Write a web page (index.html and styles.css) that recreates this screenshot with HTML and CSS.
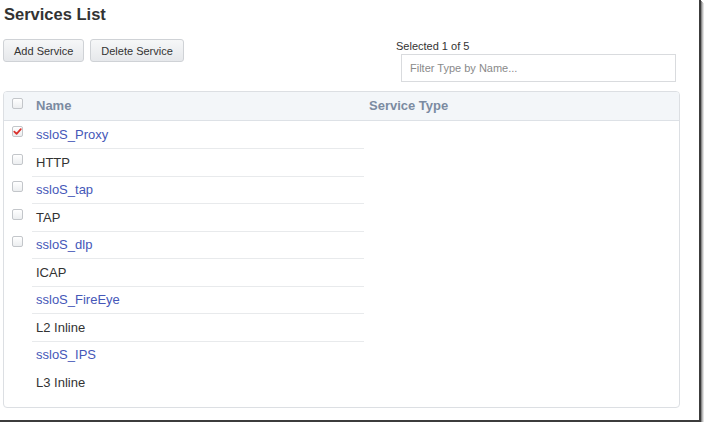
FILE: index.html
```html
<!DOCTYPE html>
<html>
<head>
<meta charset="utf-8">
<link rel="stylesheet" href="styles.css">
</head>
<body>
<div class="frame">
  <h1 class="title">Services List</h1>
  <div class="toolbar">
    <div class="buttons">
      <button class="btn">Add Service</button>
      <button class="btn">Delete Service</button>
    </div>
    <div class="filter">
      <div class="selected">Selected 1 of 5</div>
      <input class="filter-input" type="text" placeholder="Filter Type by Name...">
    </div>
  </div>
  <div class="panel">
    <div class="head">
      <div class="cell-cb"><span class="cb"></span></div>
      <div class="cell-name">Name</div>
      <div class="cell-type">Service Type</div>
    </div>
    <div class="row"><div class="cell-cb"><span class="cb checked"><svg viewBox="0 0 11 11" width="11" height="11"><path d="M2.3 5.6 L4.6 7.8 L8.8 3.2" fill="none" stroke="#d9322e" stroke-width="1.8" stroke-linecap="round" stroke-linejoin="round"/></svg></span></div><div class="cell-name sep"><span class="link">ssloS_Proxy</span></div><div class="cell-type"></div></div>
    <div class="row"><div class="cell-cb"><span class="cb"></span></div><div class="cell-name sep">HTTP</div><div class="cell-type"></div></div>
    <div class="row"><div class="cell-cb"><span class="cb"></span></div><div class="cell-name sep"><span class="link">ssloS_tap</span></div><div class="cell-type"></div></div>
    <div class="row"><div class="cell-cb"><span class="cb"></span></div><div class="cell-name sep">TAP</div><div class="cell-type"></div></div>
    <div class="row"><div class="cell-cb"><span class="cb"></span></div><div class="cell-name sep"><span class="link">ssloS_dlp</span></div><div class="cell-type"></div></div>
    <div class="row"><div class="cell-cb"></div><div class="cell-name sep">ICAP</div><div class="cell-type"></div></div>
    <div class="row"><div class="cell-cb"></div><div class="cell-name sep"><span class="link">ssloS_FireEye</span></div><div class="cell-type"></div></div>
    <div class="row"><div class="cell-cb"></div><div class="cell-name sep">L2 Inline</div><div class="cell-type"></div></div>
    <div class="row"><div class="cell-cb"></div><div class="cell-name"><span class="link">ssloS_IPS</span></div><div class="cell-type"></div></div>
    <div class="row"><div class="cell-cb"></div><div class="cell-name">L3 Inline</div><div class="cell-type"></div></div>
  </div>
</div>
</body>
</html>
```
FILE: styles.css
```css
html, body {
  margin: 0;
  padding: 0;
  background: #ffffff;
}
body {
  font-family: "Liberation Sans", Arial, sans-serif;
  color: #333333;
}
.frame {
  width: 699px;
  height: 420px;
  border-right: 2px solid #3c3c3c;
  border-bottom: 2px solid #3c3c3c;
  box-shadow: 1px 1px 0 #8a8a8a, 2px 2px 0 #bdbdbd, 3px 3px 0 #e2e2e2;
  background: #ffffff;
  overflow: hidden;
}
.title {
  margin: 0;
  padding: 4px 0 0 4px;
  font-size: 16.5px;
  line-height: 20px;
  font-weight: bold;
  color: #333333;
}
.toolbar {
  display: flex;
  justify-content: space-between;
  width: 673px;
  margin: 15px 0 0 3px;
}
.buttons {
  display: flex;
  gap: 6px;
  align-items: flex-start;
}
.btn {
  font-family: "Liberation Sans", Arial, sans-serif;
  font-size: 11px;
  color: #333333;
  height: 23px;
  padding: 0 10px;
  white-space: nowrap;
  border: 1px solid #cfd2d6;
  border-radius: 3px;
  background: linear-gradient(#f6f7f8, #e6e8eb);
  margin: 0;
}
.filter {
  display: flex;
  flex-direction: column;
  width: 281px;
}
.selected {
  font-size: 11px;
  line-height: 15px;
  color: #333333;
  padding-left: 1px;
}
.filter-input {
  box-sizing: border-box;
  width: 275px;
  height: 28px;
  margin: 0 0 0 6px;
  border: 1px solid #d9dbde;
  padding: 0 8px;
  font-family: "Liberation Sans", Arial, sans-serif;
  font-size: 11px;
  color: #333333;
  outline: none;
}
.filter-input::placeholder {
  color: #8a8a8a;
}
.panel {
  box-sizing: border-box;
  width: 677px;
  height: 317px;
  margin: 9px 0 0 3px;
  border: 1px solid #dcdfe3;
  border-radius: 4px;
}
.head {
  display: grid;
  grid-template-columns: 28px 332px 1fr;
  box-sizing: border-box;
  height: 29px;
  background: #f3f6f9;
  border-bottom: 1px solid #dde1e6;
  border-radius: 3px 3px 0 0;
  font-size: 13px;
  font-weight: bold;
  color: #7b8ba1;
}
.head .cell-name {
  padding-left: 4px;
  line-height: 28px;
}
.head .cell-type {
  padding-left: 5px;
  line-height: 28px;
}
.head .cell-cb .cb {
  margin-top: 6px;
}
.row {
  display: grid;
  grid-template-columns: 28px 332px 1fr;
  height: 27.5px;
  font-size: 13px;
}
.cb {
  display: block;
  box-sizing: border-box;
  width: 11px;
  height: 11px;
  margin: 5px 0 0 8px;
  border: 1px solid #c3c6ca;
  border-radius: 2px;
  background: linear-gradient(#ffffff, #eceef0);
}
.cb svg {
  display: block;
  margin: -1px 0 0 -1px;
}
.cell-name {
  box-sizing: border-box;
  padding-left: 4px;
  line-height: 27px;
}
.sep {
  border-bottom: 1px solid #e8eaec;
}
.link {
  color: #4557b8;
}
```
